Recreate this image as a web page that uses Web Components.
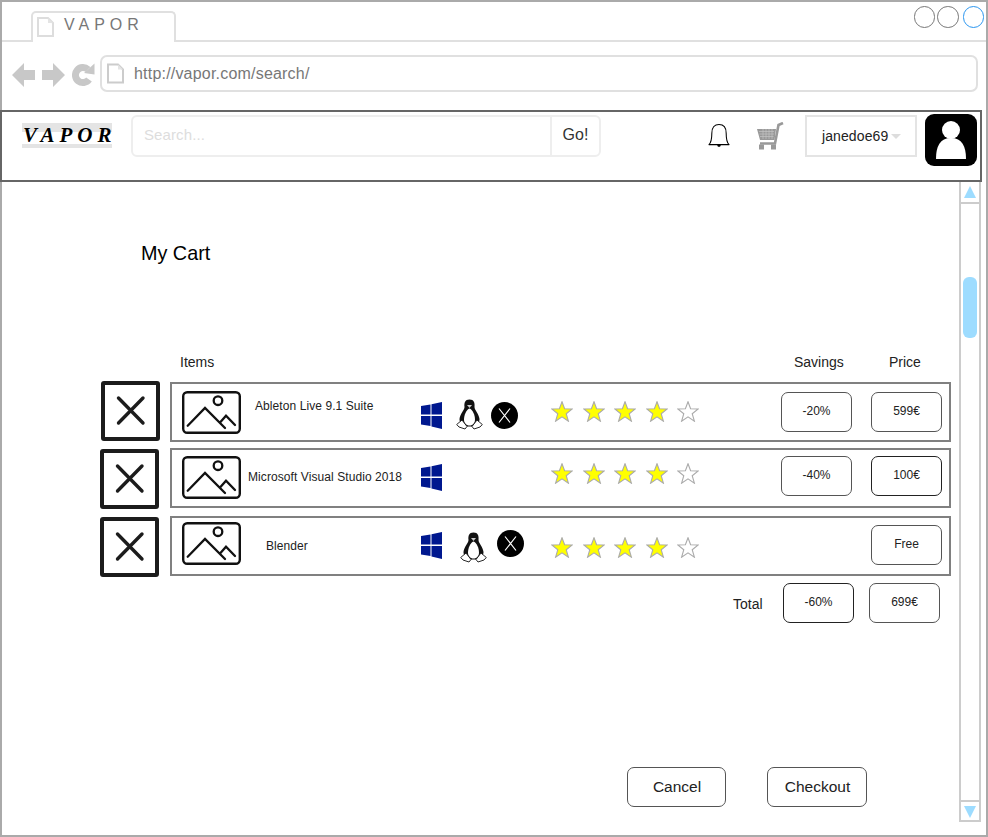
<!DOCTYPE html>
<html>
<head>
<meta charset="utf-8">
<title>VAPOR</title>
<style>
html, body { margin: 0; padding: 0; background: #fff; }
body { font-family: "Liberation Sans", Arial, sans-serif; color: #000; }
</style>
</head>
<body>
<vapor-window>
  <browser-chrome slot="chrome" url="http://vapor.com/search/"></browser-chrome>
  <site-header slot="header" user="janedoe69"></site-header>
  <cart-page slot="page">
    <cart-row style="--x-left:1px;--x-top:0px;--box-top:1px;--thumb-top:7px;--name-pad:14px;--name-top:15px;--stars-top:17px;--value-top:8px" slot="rows">
      <span slot="name">Ableton Live 9.1 Suite</span>
      <os-icon slot="os" kind="windows" style="margin-top:18px"></os-icon>
      <os-icon slot="os" kind="linux" style="margin-top:15px;margin-left:14px"></os-icon>
      <os-icon slot="os" kind="mac" style="margin-top:18px;margin-left:8px"></os-icon>
      <value-box slot="savings">-20%</value-box>
      <value-box slot="price">599€</value-box>
    </cart-row>
    <cart-row style="margin-top:6px;--x-left:0px;--x-top:1px;--box-top:0px;--thumb-top:6px;--name-pad:7px;--name-top:20px;--stars-top:13px;--value-top:6px" slot="rows">
      <span slot="name">Microsoft Visual Studio 2018</span>
      <os-icon slot="os" kind="windows" style="margin-top:14px"></os-icon>
      <value-box slot="savings">-40%</value-box>
      <value-box slot="price" dark>100€</value-box>
    </cart-row>
    <cart-row style="margin-top:7px;--x-left:0px;--x-top:1px;--box-top:0px;--thumb-top:4px;--name-pad:25px;--name-top:21px;--stars-top:19px;--value-top:7px" slot="rows">
      <span slot="name">Blender</span>
      <os-icon slot="os" kind="windows" style="margin-top:14px"></os-icon>
      <os-icon slot="os" kind="linux" style="margin-top:14px;margin-left:18px"></os-icon>
      <os-icon slot="os" kind="mac" style="margin-top:12px;margin-left:10px"></os-icon>
      <value-box slot="price">Free</value-box>
    </cart-row>
  </cart-page>
</vapor-window>

<script>
class VaporWindow extends HTMLElement {
    constructor(){
        super();
        this.attachShadow({mode:'open'}).innerHTML = `
        <style>
        :host { display:block; width:988px; height:837px; box-sizing:border-box; border:2px solid #aaa; background:#fff; }
        .head { margin-left:-2px; }
        .under { display:flex; }
        .main { width:957px; flex:none; }
        .bar { flex:none; }
        </style>
        <slot name="chrome"></slot>
        <div class="head"><slot name="header"></slot></div>
        <div class="under">
            <div class="main"><slot name="page"></slot></div>
            <scroll-bar class="bar"></scroll-bar>
        </div>`
    }
}
customElements.define("vapor-window", VaporWindow)

class BrowserChrome extends HTMLElement {
    constructor(){
        super();
        this.shadowdom = this.attachShadow({mode:'open'})
    }
    connectedCallback(){
        const page = `<path d="M1 1 H11 L16 6 V19 H1 Z" fill="#fff" stroke="#ddd" stroke-width="2"/><path d="M11 1 V6 H16" fill="#e4e4e4"/>`
        this.shadowdom.innerHTML = `
        <style>
        :host { display:block; height:108px; }
        .strip { display:flex; height:40px; box-sizing:border-box; border-bottom:2px solid #e0e0e0; align-items:flex-start; }
        .tab { margin:9px 0 -2px 29px; width:145px; height:31px; box-sizing:border-box; border:2px solid #e0e0e0; border-bottom:0; border-radius:5px 5px 0 0; background:#fff; display:flex; align-items:flex-start; color:#777; font-size:16px; }
        .tab svg { margin:4px 0 0 4px; }
        .tab span { margin:3px 0 0 10px; line-height:18px; letter-spacing:5px; }
        .lights { margin:4px 2px 0 auto; display:flex; gap:2px; }
        .lights i { display:block; width:21.5px; height:21.5px; box-sizing:border-box; border:1.5px solid #777; border-radius:50%; }
        .lights i:last-child { border-color:#2a96f0; margin-left:2px; }
        .nav { display:flex; align-items:flex-start; height:68px; }
        .nav > svg { flex:none; }
        .addr { margin:13px 0 0 5px; width:878px; height:37px; box-sizing:border-box; border:2px solid #e0e0e0; border-radius:7px; display:flex; align-items:center; color:#777; font-size:16px; }
        .addr svg { margin-left:5px; }
        .addr span { margin-left:10px; letter-spacing:.2px; }
        </style>
        <div class="strip">
            <div class="tab"><svg width="17" height="20" viewBox="0 0 17 20">${page}</svg><span>VAPOR</span></div>
            <div class="lights"><i></i><i></i><i></i></div>
        </div>
        <div class="nav">
            <svg style="margin:20px 0 0 10px" width="24" height="26" viewBox="0 0 24 26"><path d="M0 13 L12 1 V8 H23 V18 H12 V25 Z" fill="#c8c8c8"/></svg>
            <svg style="margin:20px 0 0 6px" width="24" height="26" viewBox="0 0 24 26"><path d="M23 13 L11 1 V8 H0 V18 H11 V25 Z" fill="#c8c8c8"/></svg>
            <svg style="margin:21px 0 0 6px" width="23" height="24" viewBox="0 0 23 24"><path d="M17 16.5 A7.5 7.5 0 1 1 16 6.5" fill="none" stroke="#c8c8c8" stroke-width="7"/><path d="M12 10 L22.5 0.5 V11.5 Z" fill="#c8c8c8"/></svg>
            <div class="addr"><svg width="17" height="21" viewBox="0 0 17 20">${page.replace(/#ddd/,'#ccc')}</svg><span>${this.getAttribute('url')}</span></div>
        </div>`
    }
}
customElements.define("browser-chrome", BrowserChrome)

class SiteHeader extends HTMLElement {
    constructor(){
        super();
        this.shadowdom = this.attachShadow({mode:'open'})
    }
    connectedCallback(){
        this.shadowdom.innerHTML = `
        <style>
        :host { display:flex; align-items:flex-start; width:982px; height:72px; box-sizing:border-box; border:2px solid #666; background:#fff; }
        .logo { margin:11px 0 0 20px; width:90px; height:25px; box-sizing:border-box; padding:2px 0 0 1px; font:italic bold 21px/21px "Liberation Serif", serif; letter-spacing:5px; white-space:nowrap; background:linear-gradient(#e4e4e4 0 9px, #fff 9px 21px, #e4e4e4 21px); }
        .search { margin:3px 0 0 19px; width:470px; height:42px; box-sizing:border-box; border:2px solid #eee; border-radius:6px; display:flex; font-size:15px; }
        .search .ph { flex:1; padding:0 0 0 11px; line-height:36px; color:#ddd; letter-spacing:.1px; }
        .search .go { width:47px; border-left:2px solid #eee; text-align:center; line-height:36px; font-size:16px; color:#333; }
        .bell { margin:11px 0 0 107px; }
        .cart { margin:10px 0 0 27px; }
        .drop { margin:3px 0 0 21px; width:112px; height:42px; box-sizing:border-box; border:2px solid #e4e4e4; display:flex; align-items:center; padding:0 0 0 15px; font-size:14px; color:#222; letter-spacing:.1px; }
        .drop i { margin:1px 0 0 3px; width:0; height:0; border:5px solid transparent; border-top:5px solid #ddd; border-bottom:0; }
        .avatar { margin:2px 0 0 8px; width:52px; height:52px; border-radius:9px; background:#000; display:flex; }
        </style>
        <div class="logo">VAPOR</div>
        <div class="search"><div class="ph">Search...</div><div class="go">Go!</div></div>
        <svg class="bell" width="22" height="26" viewBox="0 0 23 26"><path d="M1 22 C4 19 4 15 4 10 C4 4 7 1 11.5 1 C16 1 19 4 19 10 C19 15 19 19 22 22 Z" fill="#fff" stroke="#000" stroke-width="1.1" stroke-linejoin="round"/><path d="M9.5 22 A2 2.5 0 0 0 13.5 22 Z" fill="#000"/></svg>
        <svg class="cart" width="27" height="28" viewBox="0 0 27 28">
            <path d="M0 7 H19 L17.5 18 H3 Z" fill="#999"/>
            <path d="M2 9.5 H17 M2.5 12 H17 M3 14.5 H16.5 M6 7 V17 M9 7 V17 M12 7 V17 M15 7 V17" stroke="#c4c4c4" stroke-width=".7"/>
            <path d="M26 1 L21.5 3 L18 21.5 H3" fill="none" stroke="#999" stroke-width="2.6"/>
            <rect x="2" y="22.5" width="5" height="5" fill="#999"/><rect x="14" y="22.5" width="5" height="5" fill="#999"/>
        </svg>
        <div class="drop"><span>${this.getAttribute('user')}</span><i></i></div>
        <div class="avatar"><svg width="52" height="52" viewBox="0 0 52 52"><circle cx="26" cy="16" r="9" fill="#fff"/><path d="M11 45 C11 32 15 24 26 24 C37 24 41 32 41 45 Z" fill="#fff"/></svg></div>`
    }
}
customElements.define("site-header", SiteHeader)

class ScrollBar extends HTMLElement {
    constructor(){
        super();
        this.attachShadow({mode:'open'}).innerHTML = `
        <style>
        :host { display:block; width:22px; height:640px; box-sizing:border-box; border:2px solid #ccc; border-top:0; background:#fff; }
        .btn { height:20px; display:flex; align-items:center; justify-content:center; }
        .up { border-bottom:2px solid #ccc; }
        .down { border-top:2px solid #ccc; }
        .track { height:596px; box-sizing:border-box; padding-top:73px; }
        .thumb { margin-left:2px; width:14px; height:61px; border-radius:6px; background:#9ddcff; }
        .tri { width:0; height:0; border:6px solid transparent; }
        .up .tri { border-bottom:12px solid #9ddcff; border-top:0; }
        .down .tri { border-top:12px solid #9ddcff; border-bottom:0; }
        </style>
        <div class="btn up"><div class="tri"></div></div>
        <div class="track"><div class="thumb"></div></div>
        <div class="btn down"><div class="tri"></div></div>`
    }
}
customElements.define("scroll-bar", ScrollBar)

class CartPage extends HTMLElement {
    constructor(){
        super();
        this.attachShadow({mode:'open'}).innerHTML = `
        <style>
        :host { display:block; height:640px; }
        h1 { margin:0; padding:61px 0 0 139px; font-size:19.8px; font-weight:normal; line-height:20px; }
        .labels { margin-top:91px; display:flex; font-size:14px; line-height:16px; color:#222; }
        .rows { margin:11px 0 0 98px; }
        .total { margin-top:6px; display:flex; align-items:flex-start; font-size:14px; color:#222; }
        .total span { margin:13px 0 0 731px; width:50px; line-height:16px; }
        .total value-box + value-box { margin-left:15px; }
        .actions { margin:144px 0 0 625px; display:flex; }
        .actions mock-button + mock-button { margin-left:41px; width:100px; }
        </style>
        <h1>My Cart</h1>
        <div class="labels">
            <span style="margin-left:178px;width:614px">Items</span>
            <span style="width:95px">Savings</span>
            <span>Price</span>
        </div>
        <div class="rows"><slot name="rows"></slot></div>
        <div class="total">
            <span>Total</span>
            <value-box dark>-60%</value-box>
            <value-box>699€</value-box>
        </div>
        <div class="actions">
            <mock-button>Cancel</mock-button>
            <mock-button>Checkout</mock-button>
        </div>`
    }
}
customElements.define("cart-page", CartPage)

class CartRow extends HTMLElement {
    constructor(){
        super();
        this.attachShadow({mode:'open'}).innerHTML = `
        <style>
        :host { display:flex; align-items:flex-start; height:61px; }
        .rm { flex:none; width:70px; }
        remove-box { margin:var(--x-top) 0 0 var(--x-left); }
        .box { flex:none; margin-top:var(--box-top); width:781px; height:60px; box-sizing:border-box; border:2px solid #808080; display:flex; align-items:flex-start; }
        image-thumb { margin:var(--thumb-top) 0 0 10px; }
        .name { flex:none; width:180px; box-sizing:border-box; padding:var(--name-top) 0 0 var(--name-pad); font-size:12px; line-height:14px; letter-spacing:.08px; color:#222; white-space:nowrap; }
        .os { flex:none; width:130px; display:flex; align-items:flex-start; }
        star-rating { flex:none; width:230px; margin-top:var(--stars-top); }
        .savings { flex:none; width:90px; margin-top:var(--value-top); }
        .price { flex:none; margin-top:var(--value-top); }
        </style>
        <div class="rm"><remove-box></remove-box></div>
        <div class="box">
            <image-thumb></image-thumb>
            <div class="name"><slot name="name"></slot></div>
            <div class="os"><slot name="os"></slot></div>
            <star-rating value="4"></star-rating>
            <div class="savings"><slot name="savings"></slot></div>
            <div class="price"><slot name="price"></slot></div>
        </div>`
    }
}
customElements.define("cart-row", CartRow)

class RemoveBox extends HTMLElement {
    constructor(){
        super();
        this.attachShadow({mode:'open'}).innerHTML = `
        <style>
        :host { display:block; width:59px; height:60px; box-sizing:border-box; border:4px solid #1c1c1c; border-radius:3px; }
        svg { display:block; }
        </style>
        <svg width="51" height="52" viewBox="0 0 51 52"><path d="M13.5 13 L38 38 M38 13 L13.5 38" stroke="#1c1c1c" stroke-width="3.4" stroke-linecap="round"/></svg>`
    }
}
customElements.define("remove-box", RemoveBox)

class ImageThumb extends HTMLElement {
    constructor(){
        super();
        this.attachShadow({mode:'open'}).innerHTML = `
        <style>
        :host { display:block; flex:none; width:59px; height:43px; }
        svg { display:block; }
        </style>
        <svg width="59" height="43" viewBox="0 0 59 43"><rect x="1.2" y="1.2" width="56.6" height="40.6" rx="4" fill="#fff" stroke="#111" stroke-width="2.4"/><circle cx="36" cy="9.7" r="4.3" fill="none" stroke="#111" stroke-width="2.3"/><path d="M5.7 34.7 L23 17 L43 37 M38.7 30.7 L44 24.7 L53 34" fill="none" stroke="#111" stroke-width="2.3" stroke-linecap="round"/></svg>`
    }
}
customElements.define("image-thumb", ImageThumb)

class OsIcon extends HTMLElement {
    constructor(){
        super();
        this.shadowdom = this.attachShadow({mode:'open'})
    }
    connectedCallback(){
        const kind = this.getAttribute('kind')
        let svg = ''
        if(kind == 'windows'){
            svg = `<svg width="21" height="27" viewBox="0 0 21 27">
                <path d="M0 4 L9.5 2.5 V12.5 H0 Z M10.5 2.3 L21 0 V12.5 H10.5 Z M0 14 H9.5 V24 L0 22.5 Z M10.5 14 H21 V27 L10.5 24.6 Z" fill="#00188f"/></svg>`
        } else if(kind == 'linux'){
            svg = `<svg width="27" height="31" viewBox="0 0 27 31">
                <path d="M13.5 0.5 C9 0.5 8 4 8.5 8 C8.5 11 4 15 3.5 20 C3.3 23 6 26 9 27.5 H18 C21 26 23.7 23 23.5 20 C23 15 18.5 11 18.5 8 C19 4 18 0.5 13.5 0.5 Z" fill="#111"/>
                <path d="M13.5 9.5 C10.5 10.5 8 16 8 20.5 C8 24 10 26.5 13.5 26.5 C17 26.5 19 24 19 20.5 C19 16 16.5 10.5 13.5 9.5 Z" fill="#fff"/>
                <path d="M11 6 H16 L13.5 9 Z" fill="#ccc"/>
                <path d="M6 21 L0.7 25.5 L3 28 L9 30 L11 27.5 Z M21 21 L26.3 25.5 L24 28 L18 30 L16 27.5 Z" fill="#fff" stroke="#111" stroke-width=".9"/></svg>`
        } else {
            svg = `<svg width="27" height="27" viewBox="0 0 27 27"><circle cx="13.5" cy="13.5" r="13.5" fill="#000"/><path d="M8 6.5 L19 20.5 M19 6.5 L8 20.5" stroke="#fff" stroke-width="1.2"/></svg>`
        }
        this.shadowdom.innerHTML = `<style>:host{display:block;flex:none} svg{display:block}</style>${svg}`
    }
}
customElements.define("os-icon", OsIcon)

class StarRating extends HTMLElement {
    static get observedAttributes(){
        return ['value']
    }
    constructor(){
        super();
        this.shadowdom = this.attachShadow({mode:'open'})
    }
    attributeChangedCallback(){
        this.render()
    }
    connectedCallback(){
        this.render()
    }
    render(){
        const value = Number(this.getAttribute('value') || 0)
        let stars = ''
        for(let i = 0; i < 5; i++){
            const on = i < value
            stars += `<svg width="22" height="21" viewBox="0 0 22 21"><polygon points="11,0.8 13.6,7.8 21.2,8 15.2,12.7 17.4,20.2 11,15.8 4.6,20.2 6.8,12.7 0.8,8 8.4,7.8" fill="${on ? '#ffff00' : '#fff'}" stroke="#aaa" stroke-width="1.1"/></svg>`
        }
        this.shadowdom.innerHTML = `
        <style>
        :host { display:flex; gap:9.5px; }
        svg { display:block; flex:none; }
        </style>${stars}`
    }
}
customElements.define("star-rating", StarRating)

class ValueBox extends HTMLElement {
    constructor(){
        super();
        this.attachShadow({mode:'open'}).innerHTML = `
        <style>
        :host { display:flex; align-items:center; justify-content:center; flex:none; width:71px; height:40px; box-sizing:border-box; padding-bottom:2px; border:1.5px solid #555; border-radius:7px; font-size:12px; background:#fff; color:#222; }
        :host([dark]) { border-color:#222; }
        </style>
        <slot></slot>`
    }
}
customElements.define("value-box", ValueBox)

class MockButton extends HTMLElement {
    constructor(){
        super();
        this.attachShadow({mode:'open'}).innerHTML = `
        <style>
        :host { display:flex; align-items:center; justify-content:center; flex:none; width:99px; height:40px; box-sizing:border-box; padding:0 0 1px 1px; border:1.5px solid #555; border-radius:7px; font-size:15.5px; background:#fff; color:#222; }
        </style>
        <slot></slot>`
    }
}
customElements.define("mock-button", MockButton)
</script>
</body>
</html>
